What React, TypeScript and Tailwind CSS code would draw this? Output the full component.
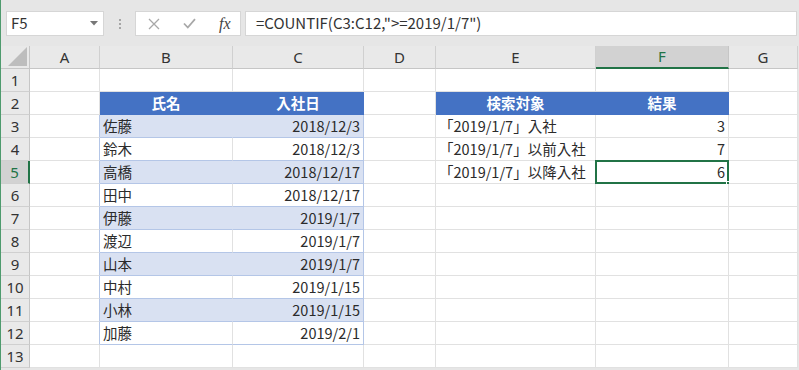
import React from "react";

const COLS = ["A", "B", "C", "D", "E", "F", "G"];
const WIDTHS = [70, 133, 131, 72, 160, 133, 69];

type Cell = { t?: string; align?: "l" | "r" | "c"; kind?: "th" | "band" | "white" };

const names: [string, string][] = [
  ["佐藤", "2018/12/3"],
  ["鈴木", "2018/12/3"],
  ["高橋", "2018/12/17"],
  ["田中", "2018/12/17"],
  ["伊藤", "2019/1/7"],
  ["渡辺", "2019/1/7"],
  ["山本", "2019/1/7"],
  ["中村", "2019/1/15"],
  ["小林", "2019/1/15"],
  ["加藤", "2019/2/1"],
];

const efData: Record<number, [string, string]> = {
  3: ["「2019/1/7」入社", "3"],
  4: ["「2019/1/7」以前入社", "7"],
  5: ["「2019/1/7」以降入社", "6"],
};

function getCell(row: number, col: number): Cell {
  if (row === 2) {
    if (col === 1) return { t: "氏名", align: "c", kind: "th" };
    if (col === 2) return { t: "入社日", align: "c", kind: "th" };
    if (col === 4) return { t: "検索対象", align: "c", kind: "th" };
    if (col === 5) return { t: "結果", align: "c", kind: "th" };
  }
  if (row >= 3 && row <= 12 && (col === 1 || col === 2)) {
    const [n, d] = names[row - 3];
    const band = row % 2 === 1;
    return { t: col === 1 ? n : d, align: col === 1 ? "l" : "r", kind: band ? "band" : "white" };
  }
  if (efData[row] && (col === 4 || col === 5)) {
    const [e, f] = efData[row];
    return { t: col === 4 ? e : f, align: col === 4 ? "l" : "r" };
  }
  return {};
}

function GridCell({ row, col }: { row: number; col: number }) {
  const c = getCell(row, col);
  let cls =
    "relative flex items-center overflow-visible whitespace-nowrap text-[14.5px] leading-none text-[#2b2b2b] border-r border-b ";
  if (c.kind === "th") {
    cls += "bg-[#4472c4] text-white font-bold border-b-[#4472c4] border-r-[#4472c4] ";
  } else if (c.kind === "band") {
    cls += "bg-[#d9e1f2] border-b-[#b4c6e7] ";
    cls += col === 1 ? "border-r-[#d9e1f2] " : "border-r-[#b4c6e7] ";
  } else if (c.kind === "white") {
    cls += "bg-white border-b-[#b4c6e7] ";
    cls += col === 1 ? "border-r-[#e1e1e1] " : "border-r-[#b4c6e7] ";
  } else {
    cls += "bg-white border-b-[#e1e1e1] ";
    if (col === 0 && row >= 3 && row <= 12) cls += "border-r-[#b4c6e7] ";
    else cls += "border-r-[#e1e1e1] ";
  }
  if (c.align === "c") cls += "justify-center ";
  else if (c.align === "r") cls += "justify-end pr-[3px] ";
  else cls += "justify-start pl-[3px] ";
  const selected = row === 5 && col === 5;
  return (
    <div className={cls} style={{ fontFamily: '"Noto Sans CJK JP", "Noto Sans", sans-serif' }}>
      <span className="pt-[1px]">{c.t}</span>
      {selected && (
        <>
          <div className="pointer-events-none absolute -left-[1px] -top-[1px] right-[-1px] bottom-[-1px] border-2 border-[#217346]" />
          <div className="absolute right-[-3px] bottom-[-3px] h-[5px] w-[5px] bg-[#217346] border border-white" />
        </>
      )}
    </div>
  );
}

export default function App() {
  const rows = Array.from({ length: 13 }, (_, i) => i + 1);
  const gridCols = "29px " + WIDTHS.map((w) => w + "px").join(" ");
  return (
    <div
      className="flex h-[370px] w-[799px] overflow-hidden bg-[#e6e6e6]"
      style={{ fontFamily: '"Noto Sans", "Liberation Sans", sans-serif' }}
    >
      <div className="w-[1px] shrink-0 bg-[#4f9b6e]" />
      <div className="flex min-w-0 flex-1 flex-col">
        <div className="flex h-[46px] shrink-0 items-start pt-[11px]">
          <div className="ml-[5px] flex h-[25px] w-[98px] items-center justify-between border border-[#d6d6d6] bg-white pl-[4px] pr-[5px]">
            <span className="text-[15px] text-[#333]" style={{ fontFamily: '"Noto Sans CJK JP", sans-serif' }}>
              F5
            </span>
            <svg width="8" height="5" viewBox="0 0 8 5">
              <polygon points="0,0 8,0 4,4.5" fill="#777" />
            </svg>
          </div>
          <div className="flex h-[25px] w-[31px] flex-col items-center justify-center gap-[2px]">
            <div className="h-[2px] w-[2px] bg-[#a6a6a6]" />
            <div className="h-[2px] w-[2px] bg-[#a6a6a6]" />
            <div className="h-[2px] w-[2px] bg-[#a6a6a6]" />
          </div>
          <div className="flex h-[25px] w-[106px] items-center border border-[#d6d6d6] bg-white">
            <svg className="ml-[12px]" width="12" height="12" viewBox="0 0 12 12">
              <path d="M1 1 L11 11 M11 1 L1 11" stroke="#a8a8a8" strokeWidth="1.3" fill="none" />
            </svg>
            <svg className="ml-[23px]" width="13" height="11" viewBox="0 0 13 11">
              <path d="M1 5.5 L4.8 9.5 L12 1.2" stroke="#a8a8a8" strokeWidth="1.8" fill="none" />
            </svg>
            <span
              className="ml-[23px] text-[16px] italic text-[#444]"
              style={{ fontFamily: '"Liberation Serif", serif' }}
            >
              fx
            </span>
          </div>
          <div className="ml-[4px] mr-[2px] flex h-[25px] flex-1 items-center border border-[#d6d6d6] bg-white pl-[10px]">
            <span className="text-[15px] text-[#333]" style={{ fontFamily: '"Noto Sans CJK JP", sans-serif' }}>
              =COUNTIF(C3:C12,"&gt;=2019/1/7")
            </span>
          </div>
        </div>
        <div className="grid" style={{ gridTemplateColumns: gridCols, gridTemplateRows: "23px repeat(13, 23px)" }}>
          <div className="relative border-b border-r border-[#c6c6c6] bg-[#e9e9e9]">
            <svg className="absolute right-[2px] bottom-[2px]" width="19" height="19" viewBox="0 0 19 19">
              <polygon points="19,0 19,19 0,19" fill="#bdbdbd" />
            </svg>
          </div>
          {COLS.map((c) => (
            <div
              key={c}
              className={
                "flex items-center justify-center text-[15px] " +
                (c === "F"
                  ? "bg-[#d2d2d2] text-[#217346] border-b-2 border-b-[#217346] border-r border-r-[#c6c6c6]"
                  : "bg-[#e9e9e9] text-[#333] border-b border-b-[#c6c6c6] border-r border-r-[#d0d0d0]")
              }
            >
              {c}
            </div>
          ))}
          {rows.map((r) => (
            <React.Fragment key={r}>
              <div
                className={
                  "flex items-center justify-center text-[15px] " +
                  (r === 5
                    ? "bg-[#d2d2d2] text-[#217346] border-r-2 border-r-[#217346] border-b border-b-[#d0d0d0]"
                    : "bg-[#e9e9e9] text-[#333] border-r border-r-[#c6c6c6] border-b border-b-[#d0d0d0]")
                }
              >
                {r}
              </div>
              {COLS.map((_, ci) => (
                <GridCell key={ci} row={r} col={ci} />
              ))}
            </React.Fragment>
          ))}
        </div>
      </div>
    </div>
  );
}
